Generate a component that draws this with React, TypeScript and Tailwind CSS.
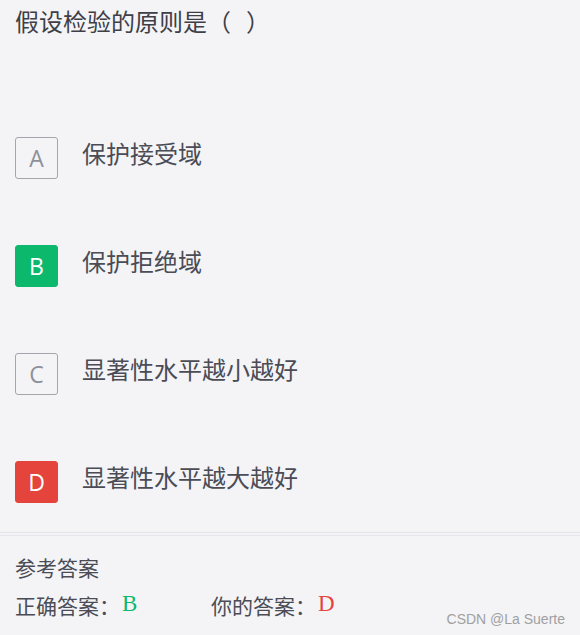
import React from "react";

const cjk = { fontFamily: '"Noto Sans CJK SC", "Noto Sans", sans-serif' };

function Option({ letter, text, state }: { letter: string; text: string; state: "none" | "right" | "wrong" }) {
  const box =
    state === "right"
      ? "bg-[#0cb96c] text-white border-[#0cb96c]"
      : state === "wrong"
      ? "bg-[#e5443d] text-white border-[#e5443d]"
      : "bg-transparent text-[#8e9099] border-[#a4a6ae]";
  return (
    <div className="flex items-center h-[42px]">
      <div
        className={`w-[43px] h-[42px] border rounded-[3px] flex items-center justify-center text-[23px] ${box}`}
        style={{ fontFamily: '"Open Sans", "Noto Sans", sans-serif' }}
      >
        {letter}
      </div>
      <div className="ml-[24px] text-[24px] leading-[32px] text-[#4b4c55] -mt-[10px]" style={cjk}>
        {text}
      </div>
    </div>
  );
}

export default function App() {
  return (
    <div className="relative w-[580px] h-[635px] bg-[#f4f4f7] overflow-hidden" style={cjk}>
      <div className="px-[15px] pt-[5px] text-[24px] leading-[32px] text-[#3e3f47]">
        假设检验的原则是<span>（</span><span className="ml-[15px]">）</span>
      </div>
      <div className="px-[15px] pt-[100px] flex flex-col gap-[66px]">
        <Option letter="A" text="保护接受域" state="none" />
        <Option letter="B" text="保护拒绝域" state="right" />
        <Option letter="C" text="显著性水平越小越好" state="none" />
        <Option letter="D" text="显著性水平越大越好" state="wrong" />
      </div>
      <div className="mt-[29px] border-t border-[#e4e4ea]" />
      <div className="mt-[2px] border-t border-[#e6e6ec]" />
      <div className="px-[15px] pt-[16px]">
        <div className="text-[21px] leading-[30px] text-[#4b4c55]">参考答案</div>
        <div className="flex items-start mt-[8px] text-[21px] leading-[30px] text-[#4b4c55]">
          <span>正确答案：</span>
          <span
            className="ml-[2px] mt-[2px] text-[23px] leading-[24px] w-[89px] text-[#0cb96c]"
            style={{ fontFamily: '"Liberation Serif", serif' }}
          >
            B
          </span>
          <span>你的答案：</span>
          <span
            className="ml-[2px] mt-[2px] text-[23px] leading-[24px] text-[#e5443d]"
            style={{ fontFamily: '"Liberation Serif", serif' }}
          >
            D
          </span>
        </div>
      </div>
      <div
        className="absolute right-[15px] bottom-[8px] text-[14px] leading-[16px] text-[#a0a0a0]"
        style={{ fontFamily: '"Liberation Sans", Arial, sans-serif' }}
      >
        CSDN @La Suerte
      </div>
    </div>
  );
}
